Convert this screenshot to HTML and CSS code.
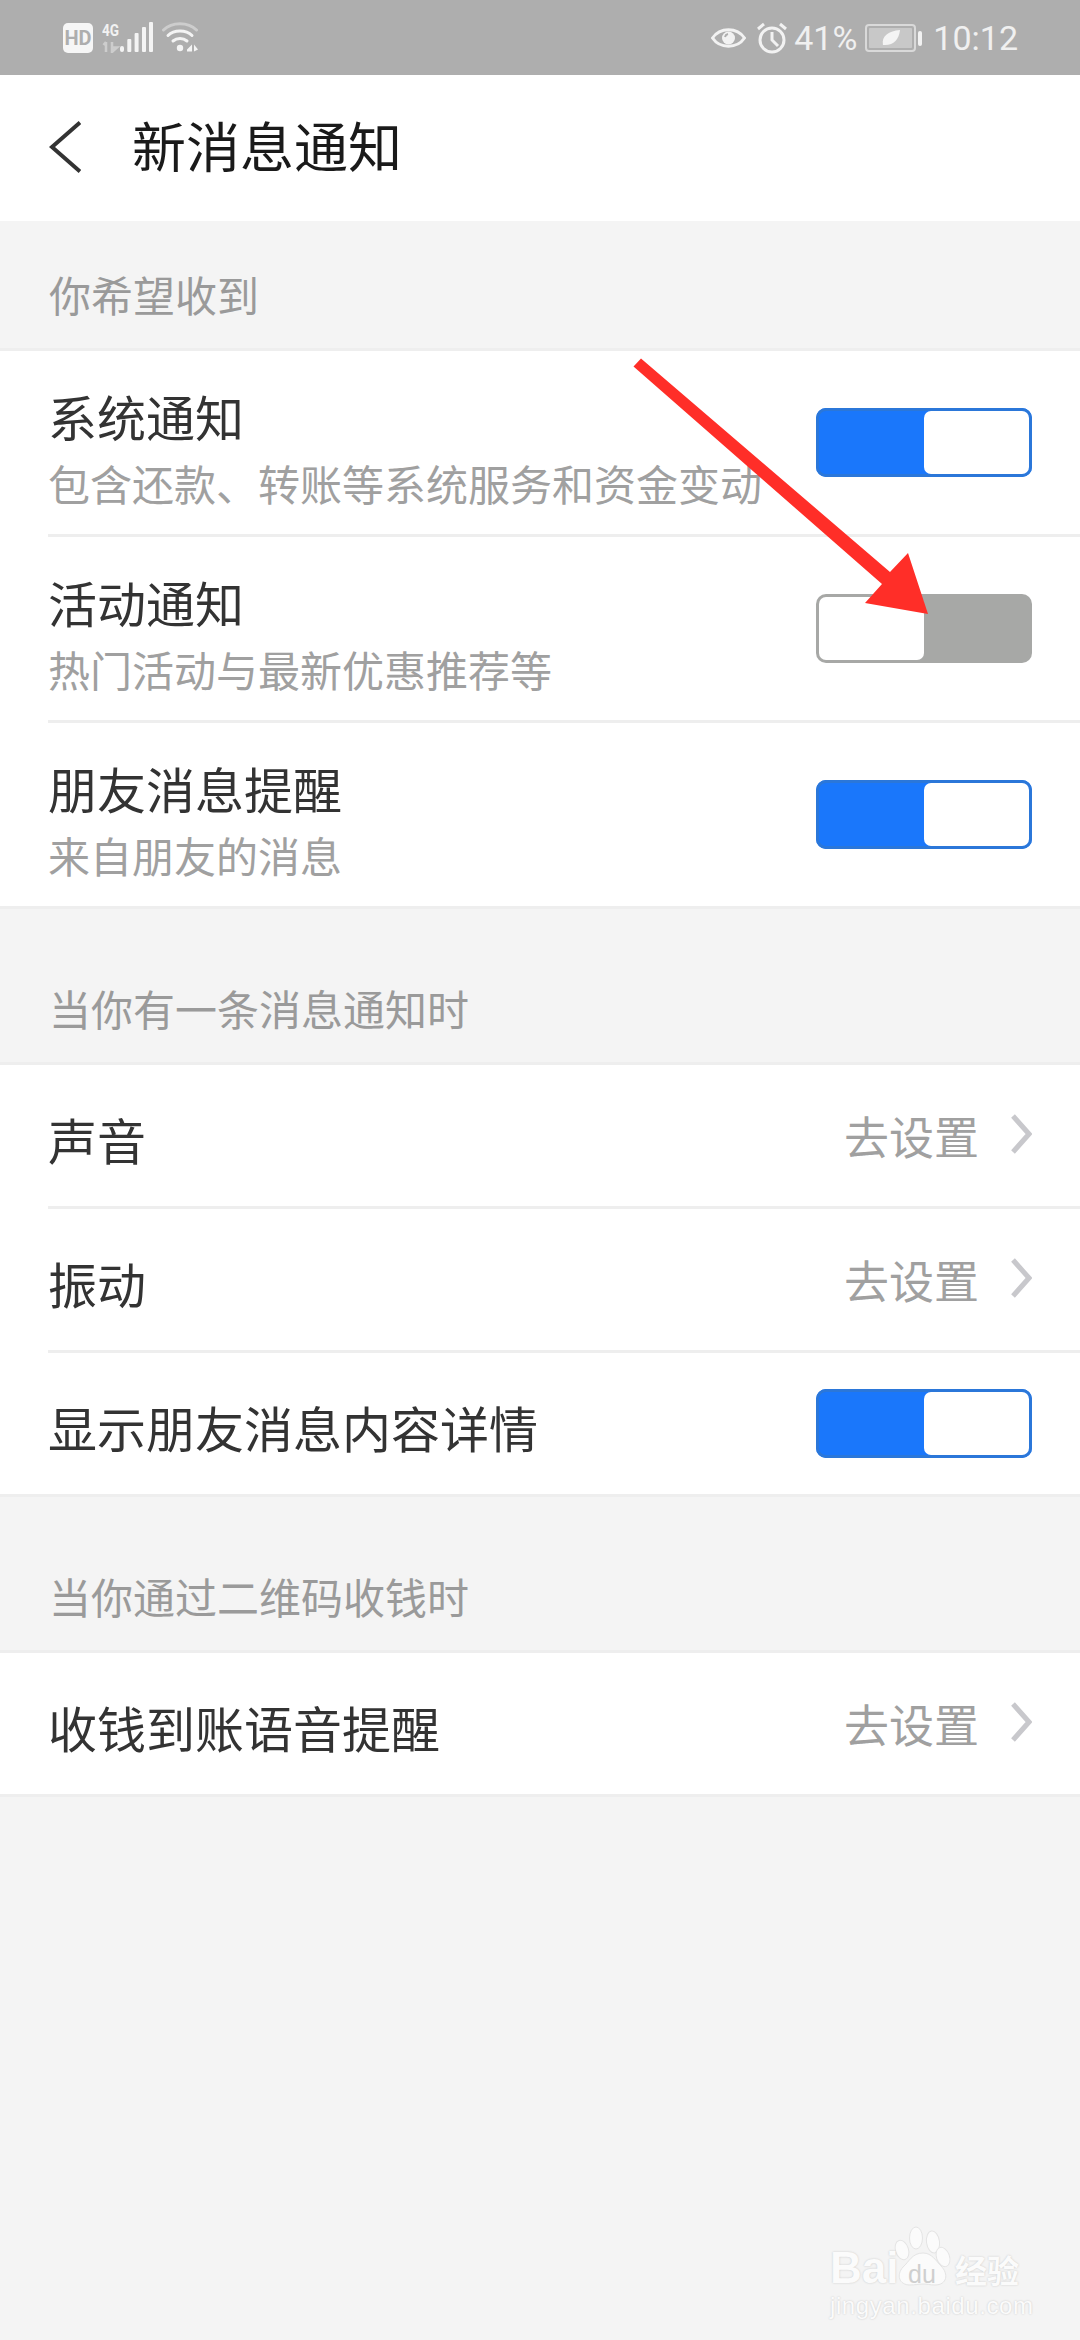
FILE: index.html
```html
<!DOCTYPE html>
<html lang="zh-CN">
<head>
<meta charset="utf-8">
<title>新消息通知</title>
<link rel="stylesheet" href="styles.css">
</head>
<body>
<div class="page">
  <div class="status">
    <div class="status-left">
      <div class="hd">HD</div>
      <div class="net">
        <span class="net-label">4G</span>
        <svg class="net-arrows" width="18" height="12" viewBox="0 0 18 12"><path d="M4 1v10M1.500 4l2.500-3M10 1v10l5-4.500h-5" fill="none" stroke="#cdcdcd" stroke-width="2.500"/></svg>
      </div>
      <svg class="signal" width="33" height="32" viewBox="0 0 33 32"><g fill="#f4f4f4"><rect x="0" y="24" width="4" height="6" rx="2"/><rect x="7.300" y="17" width="4" height="13" rx="1"/><rect x="14.600" y="11" width="4" height="19" rx="1"/><rect x="22" y="5" width="4" height="25" rx="1"/><rect x="29" y="0" width="4" height="30" rx="1"/></g></svg>
      <svg class="wifi" width="36" height="32" viewBox="0 0 36 32"><g fill="none" stroke-linecap="round" stroke-width="3"><path d="M1.500 8C10-.5 26-.5 34.500 8" stroke="#cdcdcd"/><path d="M6 13.500C12 7.500 24 7.500 30 13.500" stroke="#f4f4f4"/><path d="M11 19C15 15.500 21 15.500 25 19" stroke="#f4f4f4"/></g><circle cx="18" cy="26" r="3.200" fill="#f4f4f4"/><path d="M25 27.500l5-5v7h-5zM32 22.500l4 5-4 2z" fill="#f4f4f4"/></svg>
    </div>
    <div class="status-right">
      <svg class="eye" width="35" height="26" viewBox="0 0 35 26"><path d="M1.500 13C9 2 26 2 33.500 13 26 24 9 24 1.500 13z" fill="none" stroke="#f2f2f2" stroke-width="3"/><circle cx="17.500" cy="13" r="6.500" fill="#f2f2f2"/><path d="M14 12a4 4 0 0 1 3-3" fill="none" stroke="#aeaeae" stroke-width="2"/></svg>
      <svg class="alarm" width="32" height="32" viewBox="0 0 32 32"><circle cx="16" cy="18" r="12" fill="none" stroke="#f2f2f2" stroke-width="3"/><path d="M16 10v8l6 6M2 7l6-5M30 7l-6-5" fill="none" stroke="#f2f2f2" stroke-width="3"/></svg>
      <span class="status-text">41%</span>
      <svg class="battery" width="58" height="28" viewBox="0 0 58 28"><rect x="1" y="1" width="49" height="26" rx="3" fill="none" stroke="#d9d9d9" stroke-width="2"/><rect x="4" y="4" width="43" height="20" rx="1" fill="#c8c8c8"/><path d="M18 21C16 12 24 7 35 6 34 16 28 22 18 21z" fill="#f4f4f4"/><rect x="53" y="7" width="4" height="15" rx="2" fill="#f2f2f2"/></svg>
      <span class="status-text">10:12</span>
    </div>
  </div>

  <header class="header">
    <svg class="back" width="32" height="52" viewBox="0 0 32 52"><path d="M31 1.500 3 26l28 24.500" fill="none" stroke="#333" stroke-width="4"/></svg>
    <h1 class="title">新消息通知</h1>
  </header>

  <div class="label first">你希望收到</div>
  <section class="group">
    <div class="row tall">
      <div class="texts"><div class="name">系统通知</div><div class="sub">包含还款、转账等系统服务和资金变动</div></div>
      <div class="toggle on"><span class="knob"></span></div>
    </div>
    <div class="row tall">
      <div class="texts"><div class="name">活动通知</div><div class="sub">热门活动与最新优惠推荐等</div></div>
      <div class="toggle off"><span class="knob"></span></div>
    </div>
    <div class="row tall">
      <div class="texts"><div class="name">朋友消息提醒</div><div class="sub">来自朋友的消息</div></div>
      <div class="toggle on"><span class="knob"></span></div>
    </div>
  </section>

  <div class="label">当你有一条消息通知时</div>
  <section class="group">
    <div class="row">
      <div class="name">声音</div>
      <div class="link"><span>去设置</span><svg class="chev" width="22" height="42" viewBox="0 0 22 42"><path d="M3 3l16 18L3 39" fill="none" stroke="#c8c8cc" stroke-width="5"/></svg></div>
    </div>
    <div class="row">
      <div class="name">振动</div>
      <div class="link"><span>去设置</span><svg class="chev" width="22" height="42" viewBox="0 0 22 42"><path d="M3 3l16 18L3 39" fill="none" stroke="#c8c8cc" stroke-width="5"/></svg></div>
    </div>
    <div class="row">
      <div class="name">显示朋友消息内容详情</div>
      <div class="toggle on"><span class="knob"></span></div>
    </div>
  </section>

  <div class="label">当你通过二维码收钱时</div>
  <section class="group">
    <div class="row">
      <div class="name">收钱到账语音提醒</div>
      <div class="link"><span>去设置</span><svg class="chev" width="22" height="42" viewBox="0 0 22 42"><path d="M3 3l16 18L3 39" fill="none" stroke="#c8c8cc" stroke-width="5"/></svg></div>
    </div>
  </section>

  <svg class="arrow" width="320" height="280" viewBox="0 0 320 280"><path d="M13 3.500 262 217 280 198 300 259 237 248 254 229 5.500 11.500z" fill="#ff2e28"/></svg>

  <div class="mark">
    <svg class="paw" width="60" height="66" viewBox="0 0 60 66"><g fill="#fbfbfb" stroke="#e4e4e4" stroke-width="1"><ellipse cx="9" cy="26" rx="6.500" ry="10" transform="rotate(-18 9 26)"/><ellipse cx="23" cy="14" rx="6.500" ry="11"/><ellipse cx="40" cy="18" rx="6.500" ry="11" transform="rotate(-8 40 18)"/><ellipse cx="50" cy="33" rx="6.500" ry="10" transform="rotate(-20 50 33)"/><path d="M30 29c9 0 13 8 18 13 8 8 6 19-6 19-5 0-8-1-12-1s-8 1-13 1C6 61 3 51 10 43c6-5 9-14 20-14z"/></g></svg>
    <div class="mark-top"><span class="bai">Bai</span><span class="du">du</span><span class="jy">经验</span></div>
    <div class="mark-url">jingyan.baidu.com</div>
  </div>
</div>
</body>
</html>
```

FILE: styles.css
```css
* { box-sizing: border-box; }
html, body { margin: 0; padding: 0; }
body { font-family: "Noto Sans CJK SC", "Noto Sans", sans-serif; background: #f4f4f4; }
.page { position: relative; width: 1080px; height: 2340px; background: #f4f4f4; overflow: hidden; }

.status { height: 75px; background: #aeaeae; display: flex; justify-content: space-between; align-items: center; padding: 0 62px 0 63px; }
.status-left, .status-right { display: flex; align-items: center; }
.hd { width: 30px; height: 30px; border-radius: 5px; background: #f6f6f6; color: #aeaeae; font: 700 20px/30px "Roboto", sans-serif; text-align: center; }
.net { display: flex; flex-direction: column; margin-left: 9px; width: 18px; }
.net-label { font: 700 16px/17px "Roboto", sans-serif; color: #f2f2f2; transform: scaleX(0.85); transform-origin: left center; }
.net-arrows { margin-top: 2px; }
.wifi { margin-left: 9px; }
.eye { margin-right: 10px; }
.alarm { margin-right: 6px; }
.status-text { font: 400 34px/40px "Roboto", sans-serif; color: #f0f0f0; }
.battery { margin-left: 8px; margin-right: 10px; }

.header { height: 146px; background: #fff; display: flex; align-items: center; padding-left: 49px; }
.back { margin-top: -3px; }
.title { margin: -6px 0 0 51px; font-size: 54px; font-weight: 400; line-height: 72px; color: #1a1a1a; }

.label { height: 153px; padding: 0 0 24px 49px; display: flex; align-items: flex-end; font-size: 42px; line-height: 60px; color: #9a9a9a; }
.label.first { height: 127px; }

.group { background: #fff; border-top: 3px solid #eeeeee; border-bottom: 3px solid #eeeeee; display: flex; flex-direction: column; gap: 3px; }
.row { position: relative; height: 141px; padding: 0 48px; display: flex; justify-content: space-between; align-items: center; }
.row.tall { height: 183px; }
.row + .row::before { content: ""; position: absolute; top: -3px; left: 48px; right: 0; height: 3px; background: #eeeeee; }

.texts { display: flex; flex-direction: column; margin-top: 12px; }
.name { font-size: 49px; line-height: 68px; color: #333; margin-top: 6px; }
.texts .name { margin-top: 0; }
.sub { font-size: 42px; line-height: 66px; color: #a0a0a0; white-space: nowrap; }

.toggle { width: 216px; height: 69px; border-radius: 10px; padding: 3px; display: flex; flex: none; }
.knob { width: 105px; height: 63px; border-radius: 7px; background: #fff; }
.toggle.on { background: #1a77fb; justify-content: flex-end; box-shadow: inset 0 0 0 3px #2b77d9; }
.toggle.off { background: #a7a8a6; justify-content: flex-start; }

.link { display: flex; align-items: center; font-size: 45px; line-height: 60px; color: #a0a0a0; margin-top: 1px; }
.chev { margin-left: 31px; margin-top: -4px; }

.arrow { position: absolute; left: 628px; top: 355px; }

.mark { position: absolute; left: 830px; top: 2224px; width: 200px; height: 96px; color: #fbfbfb; }
.paw { position: absolute; left: 63px; top: 0; }
.mark-top { position: absolute; left: 0; top: 26px; display: flex; align-items: baseline; white-space: nowrap; text-shadow: 0 0 2px #c4c4c4; }
.bai { font: 700 44px/36px "Liberation Sans", sans-serif; width: 78px; }
.du { font: 400 25px/36px "Liberation Sans", sans-serif; color: #cfcfcf; width: 47px; text-shadow: none; }
.jy { font: 700 32px/36px "Noto Sans CJK SC", sans-serif; }
.mark-url { position: absolute; left: 0; top: 68px; font: 400 24px/28px "Liberation Sans", sans-serif; letter-spacing: 0.6px; white-space: nowrap; text-shadow: 0 0 2px #c4c4c4; }
```
